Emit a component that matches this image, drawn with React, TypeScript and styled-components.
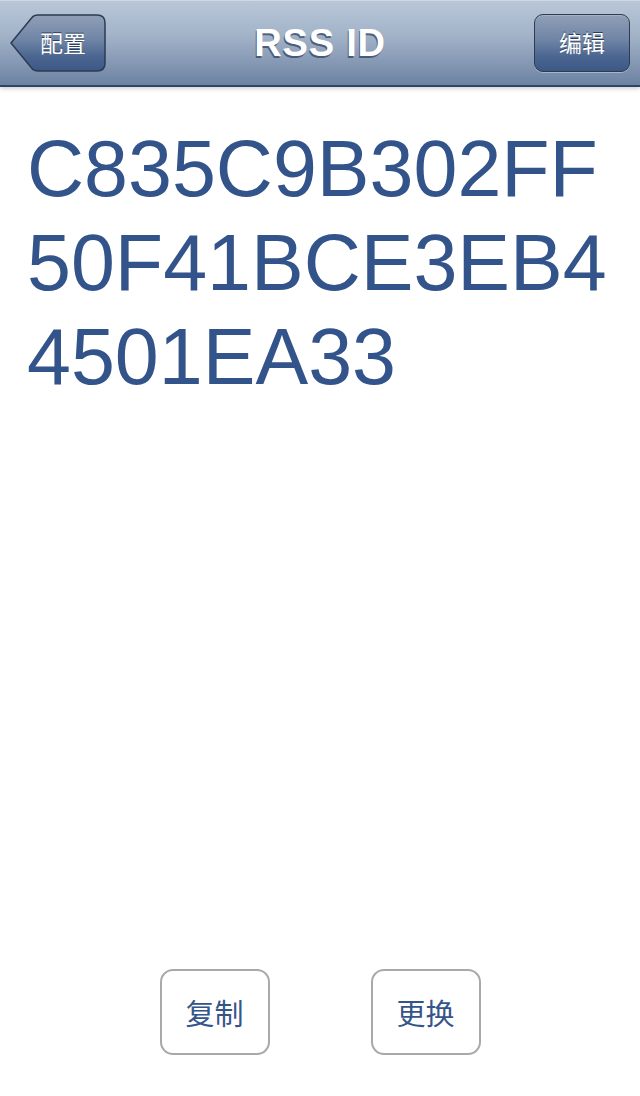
import React from "react";
import styled, { createGlobalStyle } from "styled-components";

const Global = createGlobalStyle`
  html, body { margin: 0; padding: 0; background: #ffffff; }
  body { font-family: "Liberation Sans", "Noto Sans CJK SC", sans-serif; }
  #root { min-height: 1096px; }
`;

const Screen = styled.div`
  width: 640px;
  height: 1096px;
  display: flex;
  flex-direction: column;
  background: #ffffff;
  overflow: hidden;
`;

const NavBar = styled.header`
  position: relative;
  height: 87px;
  flex: none;
  display: flex;
  align-items: center;
  justify-content: space-between;
  padding: 0 10px;
  box-sizing: border-box;
  background: linear-gradient(to bottom, #b9c7d8 0%, #a3b4c9 40%, #8497b3 75%, #6b82a2 100%);
  border-top: 1px solid #cfd9e5;
  border-bottom: 2px solid #2f4464;
  box-shadow: 0 2px 4px rgba(0, 0, 0, 0.18);
  z-index: 1;
`;

const Title = styled.h1`
  position: absolute;
  left: 0;
  right: 0;
  top: 0;
  bottom: 0;
  margin: 0;
  display: flex;
  align-items: center;
  justify-content: center;
  font-family: "Liberation Sans", Arial, sans-serif;
  font-weight: bold;
  font-size: 38px;
  letter-spacing: 0.8px;
  color: #ffffff;
  text-shadow: -1px 1.5px 0 rgba(52, 68, 96, 0.75);
  pointer-events: none;
`;

const BackButton = styled.button`
  position: relative;
  z-index: 2;
  width: 96px;
  height: 58px;
  padding: 0 0 0 10px;
  margin: 0;
  border: none;
  background: transparent;
  display: flex;
  align-items: center;
  justify-content: center;
  cursor: pointer;
`;

const BackShape = styled.svg`
  position: absolute;
  left: 0;
  top: 0;
`;

const NavLabel = styled.span`
  position: relative;
  font-family: "Noto Sans CJK SC", sans-serif;
  font-size: 23px;
  color: #ffffff;
  text-shadow: 0 -1px 0 #2d3e5a;
  line-height: 1;
  margin-top: -2px;
`;

const EditButton = styled.button`
  position: relative;
  z-index: 2;
  width: 96px;
  height: 58px;
  margin: 0;
  padding: 0;
  box-sizing: border-box;
  border: 1.5px solid #2e3b52;
  border-radius: 9px;
  background: linear-gradient(to bottom, #909fb7 0%, #6f84a5 45%, #4a6590 75%, #3c5885 100%);
  box-shadow: 0 1px 0 rgba(255, 255, 255, 0.35), inset 0 1px 0 rgba(255, 255, 255, 0.2);
  display: flex;
  align-items: center;
  justify-content: center;
  cursor: pointer;
`;

const Content = styled.main`
  flex: 1;
  display: flex;
  flex-direction: column;
  padding: 35px 10px 41px 27px;
  box-sizing: border-box;
`;

const IdText = styled.div`
  font-family: "Liberation Sans", Arial, sans-serif;
  font-size: 79px;
  line-height: 94px;
  color: #33548a;
  word-break: break-all;
`;

const Actions = styled.div`
  margin-top: auto;
  display: flex;
  justify-content: center;
  gap: 101px;
  margin-left: -27px;
  margin-right: -10px;
`;

const ActionButton = styled.button`
  width: 110px;
  height: 86px;
  box-sizing: border-box;
  border: 2px solid #a9a9a9;
  border-radius: 13px;
  background: #ffffff;
  font-family: "Noto Sans CJK SC", sans-serif;
  font-size: 29px;
  color: #34558a;
  display: flex;
  align-items: center;
  justify-content: center;
  padding: 0;
  cursor: pointer;
`;

export default function App() {
  return (
    <>
      <Global />
      <Screen>
        <NavBar>
          <BackButton>
            <BackShape width="96" height="58" viewBox="0 0 96 58">
              <defs>
                <linearGradient id="backGrad" x1="0" y1="0" x2="0" y2="1">
                  <stop offset="0" stopColor="#909fb7" />
                  <stop offset="0.45" stopColor="#6f84a5" />
                  <stop offset="0.75" stopColor="#4a6590" />
                  <stop offset="1" stopColor="#3c5885" />
                </linearGradient>
              </defs>
              <path
                d="M1 29 L22 3.5 Q24 1 28 1 L87 1 Q95 1 95 9 L95 49 Q95 57 87 57 L28 57 Q24 57 22 54.5 Z"
                fill="url(#backGrad)"
                stroke="#2e3b52"
                strokeWidth="1.5"
              />
            </BackShape>
            <NavLabel>配置</NavLabel>
          </BackButton>
          <Title>RSS ID</Title>
          <EditButton>
            <NavLabel>编辑</NavLabel>
          </EditButton>
        </NavBar>
        <Content>
          <IdText>C835C9B302FF50F41BCE3EB44501EA33</IdText>
          <Actions>
            <ActionButton>复制</ActionButton>
            <ActionButton>更换</ActionButton>
          </Actions>
        </Content>
      </Screen>
    </>
  );
}
